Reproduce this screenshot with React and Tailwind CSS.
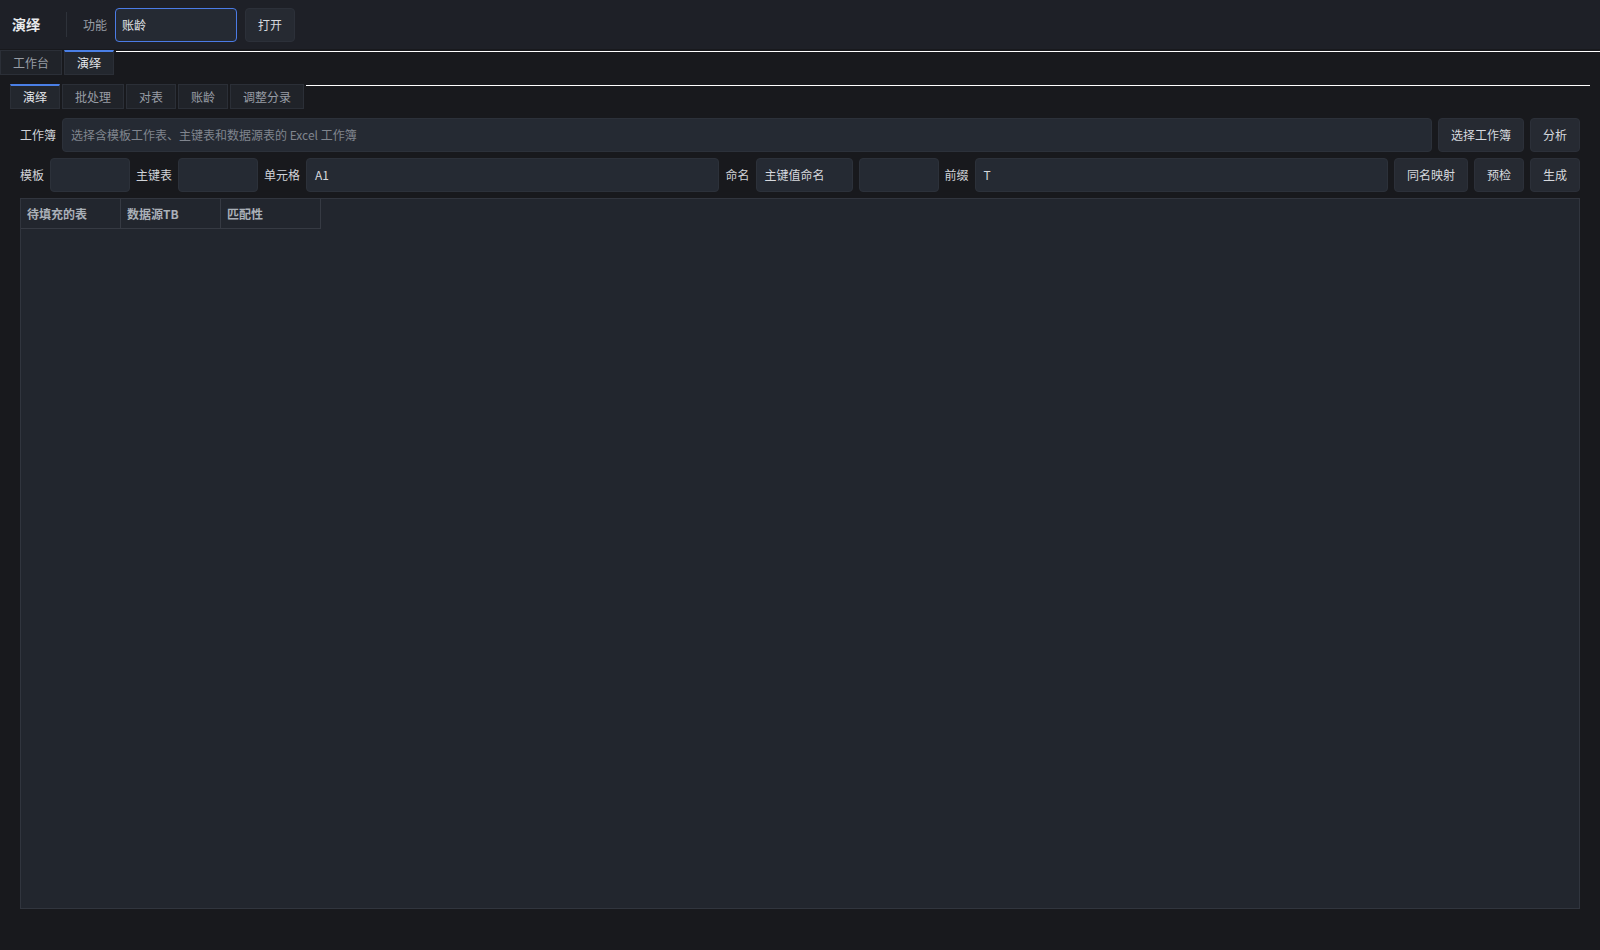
import React from 'react';

const font = { fontFamily: '"Noto Sans CJK SC", "Noto Sans", sans-serif' };

const Field = ({ className = '', children, muted }) => (
  <div
    className={`flex h-[34px] items-center rounded-[4px] border border-[#2c313a] bg-[#252a33] px-2 ${
      muted ? 'text-[#80858e]' : 'text-[#d6d9de]'
    } ${className}`}
  >
    {children}
  </div>
);

const Btn = ({ children }) => (
  <button className="h-[34px] shrink-0 rounded-[4px] border border-[#2c3039] bg-[#262a32] px-3 text-[#d6d9de]">
    {children}
  </button>
);

const Label = ({ children }) => <span className="shrink-0 text-[#d0d3d8]">{children}</span>;

const Tab = ({ children, active }) => (
  <div
    className={`flex h-[25px] items-center border px-3 ${
      active
        ? 'border-[#2b2f37] border-t-2 border-t-[#4a7fe6] bg-[#23272e] text-[#e4e6ea]'
        : 'border-[#2b2f37] bg-[#202329] text-[#989da5]'
    }`}
  >
    {children}
  </div>
);

export default function App() {
  return (
    <div className="flex h-screen w-full flex-col bg-[#18191d] text-[12px]" style={font}>
      <header className="flex h-[49px] shrink-0 items-center bg-[#1e2027] pl-3">
        <span className="text-[14px] font-bold text-[#e8eaed]">演绎</span>
        <div className="ml-[26px] h-[25px] w-px bg-[#2e323a]" />
        <span className="ml-4 text-[#999ea6]">功能</span>
        <div className="ml-2 flex h-[34px] w-[122px] items-center rounded-[4px] border border-[#4b7be5] bg-[#252a33] px-[6px] text-[#e0e3e7]">
          账龄
        </div>
        <button className="ml-2 h-[34px] w-[50px] rounded-[4px] border border-[#2c3039] bg-[#262a32] text-[#d6d9de]">
          打开
        </button>
      </header>

      <div className="mt-px flex h-[25px] shrink-0 items-start gap-[2px]">
        <Tab>工作台</Tab>
        <Tab active>演绎</Tab>
        <div className="mt-px h-px flex-1 bg-white" />
      </div>

      <div className="mt-[9px] flex h-[25px] shrink-0 items-start gap-[2px] px-[10px]">
        <Tab active>演绎</Tab>
        <Tab>批处理</Tab>
        <Tab>对表</Tab>
        <Tab>账龄</Tab>
        <Tab>调整分录</Tab>
        <div className="mt-px h-px flex-1 bg-white" />
      </div>

      <div className="mt-[9px] flex min-h-0 flex-1 flex-col gap-[6px] px-5 pb-[41px]">
        <div className="flex items-center gap-[6px]">
          <Label>工作簿</Label>
          <Field className="flex-1" muted>
            选择含模板工作表、主键表和数据源表的 Excel 工作簿
          </Field>
          <Btn>选择工作簿</Btn>
          <Btn>分析</Btn>
        </div>

        <div className="flex items-center gap-[6px]">
          <Label>模板</Label>
          <Field className="w-[80px]" />
          <Label>主键表</Label>
          <Field className="w-[80px]" />
          <Label>单元格</Label>
          <Field className="flex-1">A1</Field>
          <Label>命名</Label>
          <Field className="w-[97px]">主键值命名</Field>
          <Field className="w-[80px]" />
          <Label>前缀</Label>
          <Field className="flex-1">T</Field>
          <Btn>同名映射</Btn>
          <Btn>预检</Btn>
          <Btn>生成</Btn>
        </div>

        <div className="min-h-0 flex-1 border border-[#31353e] bg-[#22262e]">
          <div className="flex">
            {['待填充的表', '数据源TB', '匹配性'].map((h) => (
              <div
                key={h}
                className="flex h-[30px] w-[100px] items-center border-b border-r border-[#363a43] pl-[6px] font-bold text-[#aab0b8]"
              >
                {h}
              </div>
            ))}
          </div>
        </div>
      </div>
    </div>
  );
}
